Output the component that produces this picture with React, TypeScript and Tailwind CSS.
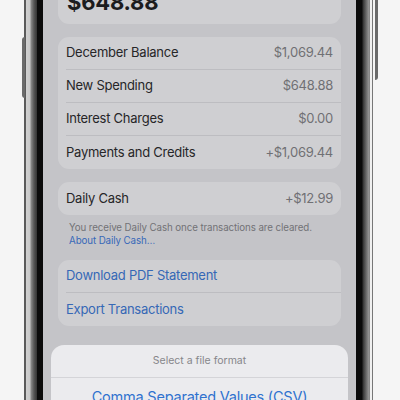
const rows = [
  { label: "December Balance", value: "$1,069.44" },
  { label: "New Spending", value: "$648.88" },
  { label: "Interest Charges", value: "$0.00" },
  { label: "Payments and Credits", value: "+$1,069.44" },
];

const font = { fontFamily: "Inter, 'Noto Sans', sans-serif" };

function Row({ label, value, last }: { label: string; value: string; last?: boolean }) {
  return (
    <div className="flex h-[33px] items-center pl-[8px]">
      <div className={`flex h-full flex-1 items-center justify-between pr-[8px] ${last ? "" : "border-b border-[#bdbdc1]"}`}>
        <span className="text-[13px] tracking-[-0.02em] text-[#262628]">{label}</span>
        <span className="text-[13px] tracking-[-0.02em] text-[#707074]">{value}</span>
      </div>
    </div>
  );
}

export default function App() {
  return (
    <div className="relative flex h-[400px] w-[400px] overflow-hidden bg-[#f5f5f5]" style={font}>
      {/* side buttons */}
      <div className="absolute left-[22px] top-[37px] h-[61px] w-[3px] rounded-l-sm bg-[#6a6a6a]" />
      <div className="absolute left-[375px] top-[-10px] h-[90px] w-[3px] rounded-r-sm bg-[#6a6a6a]" />

      <div className="ml-[24px] flex h-full w-[352px]">
        <div className="h-full w-[19px] bg-[linear-gradient(to_right,#5a5a5a_0px,#5a5a5a_2px,#d0d0d0_2px,#c8c8c8_6px,#8a8a8a_7px,#555_10px,#333_13px,#0b0b0b_13px,#0b0b0b_19px)]" />

        <div className="flex h-full flex-1 flex-col bg-[#c4c4c8] px-[15px]">
          <div className="mt-[-40px] flex h-[64px] shrink-0 items-end rounded-[11px] bg-[#cfcfd2] px-[9px] pb-[11px]">
            <span className="text-[22px] font-bold leading-none tracking-[-0.01em] text-[#1c1c1e]">$648.88</span>
          </div>

          <div className="mt-[13px] shrink-0 overflow-hidden rounded-[11px] bg-[#cfcfd2]">
            {rows.map((r, i) => (
              <Row key={r.label} label={r.label} value={r.value} last={i === rows.length - 1} />
            ))}
          </div>

          <div className="mt-[13px] shrink-0 rounded-[11px] bg-[#cfcfd2]">
            <Row label="Daily Cash" value="+$12.99" last />
          </div>

          <div className="mt-[6px] whitespace-nowrap px-[11px] text-[9.75px] leading-[13px] tracking-[-0.01em]">
            <p className="text-[#727276]">You receive Daily Cash once transactions are cleared.</p>
            <p className="text-[#3768b8]">About Daily Cash…</p>
          </div>

          <div className="mt-[13px] shrink-0 overflow-hidden rounded-[11px] bg-[#cfcfd2]">
            <div className="flex h-[33px] items-center pl-[8px]">
              <div className="flex h-full flex-1 items-center border-b border-[#bdbdc1] text-[13px] tracking-[-0.02em] text-[#3668b6]">
                Download PDF Statement
              </div>
            </div>
            <div className="flex h-[33px] items-center pl-[8px] text-[13px] tracking-[-0.02em] text-[#3668b6]">
              Export Transactions
            </div>
          </div>

          <div className="mx-[-7px] mt-[19px] flex-1 rounded-t-[13px] bg-[#ebebee]">
            <div className="flex h-[33px] items-center justify-center border-b border-[#d4d4d8] text-[10.5px] text-[#86868a]">
              Select a file format
            </div>
            <div className="flex justify-center pt-[9px] text-[14.5px] leading-[20px] tracking-[-0.015em] text-[#2f72cf]">
              Comma Separated Values (CSV)
            </div>
          </div>
        </div>

        <div className="h-full w-[20px] bg-[linear-gradient(to_right,#0b0b0b_0px,#0b0b0b_6px,#333_7px,#666_10px,#999_13px,#777_14px,#f0f0f0_14px,#f0f0f0_16px,#777_16px,#777_17px,#f5f5f5_17px)]" />
      </div>
    </div>
  );
}
